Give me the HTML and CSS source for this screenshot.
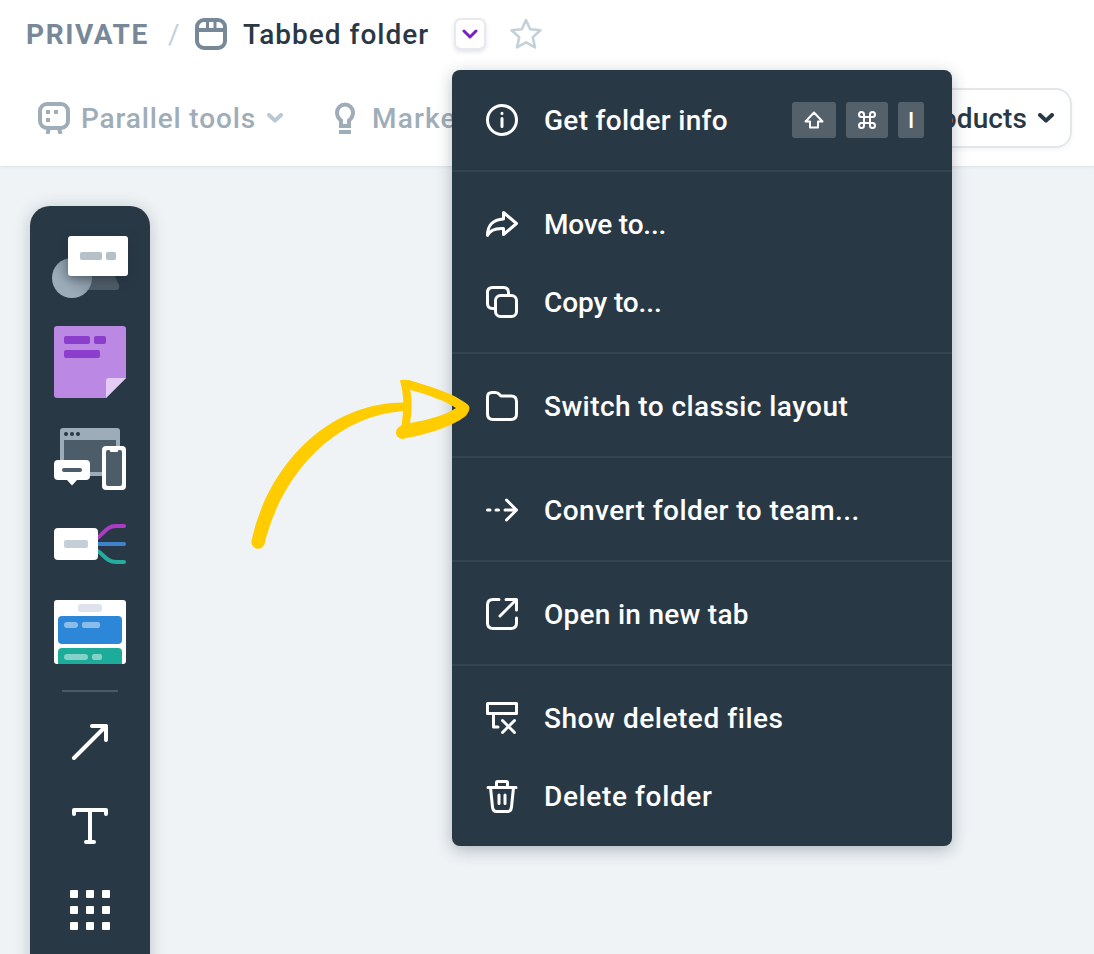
FILE: index.html
```html
<!DOCTYPE html>
<html lang="en">
<head>
	<meta charset="utf-8">
	<title>Tabbed folder</title>
	<link rel="stylesheet" href="styles.css">
</head>
<body>
	<header class="header">
		<div class="crumbs">
			<span class="space">PRIVATE</span>
			<span class="slash">/</span>
			<svg class="folder-icon" width="32" height="32" fill="none" stroke="#778998" stroke-width="4">
				<rect x="2" y="2" width="28" height="28" rx="7"/>
				<path d="M2 12H30"/>
				<path stroke-width="3" d="M12.500 2V12M20 2V12"/>
			</svg>
			<h1 class="title">Tabbed folder</h1>
			<button class="dropdown">
				<svg width="16" height="10" fill="none" stroke="#7a1fc0" stroke-width="3" stroke-linecap="round" stroke-linejoin="round"><path d="M2 2L8 8L14 2"/></svg>
			</button>
			<svg class="star" width="34" height="34" fill="none" stroke="#c4d0da" stroke-width="2.6" stroke-linejoin="round">
				<path d="M17 3L21.200 12.200L31.400 13.200L23.800 20.200L26 30.400L17 25.400L8 30.400L10.200 20.200L2.600 13.200L12.800 12.200Z"/>
			</svg>
		</div>
		<nav class="tabs">
			<a class="tab tab-tools">
				<svg width="32" height="32" fill="none" stroke="#9fadb9" stroke-width="4">
					<rect x="2" y="2" width="28" height="24" rx="7"/>
					<path d="M11 26L9.500 32M21 26L22.500 32"/>
					<path stroke="none" fill="#9fadb9" d="M8 8h4v4h-4zM16 8h4v4h-4zM8 16h4v4h-4z"/>
				</svg>
				<span>Parallel tools</span>
				<svg class="chevron" width="16" height="10" fill="none" stroke="#b9c8d3" stroke-width="4" stroke-linecap="round" stroke-linejoin="round"><path d="M2 2L8 7.600L14 2"/></svg>
			</a>
			<a class="tab tab-market">
				<svg width="20" height="32" fill="none" stroke="#9fadb9" stroke-width="4">
					<path d="M6 24V18.500C3.600 16.500 2 14 2 10.500A8 8 0 0 1 18 10.500C18 14 16.400 16.500 14 18.500V24ZM4 30H16"/>
				</svg>
				<span>Marketing</span>
			</a>
			<a class="tab tab-products">
				<span>Products</span>
				<svg class="chevron" width="16" height="10" fill="none" stroke="#2a3845" stroke-width="4" stroke-linecap="round" stroke-linejoin="round"><path d="M2 2L8 7.600L14 2"/></svg>
			</a>
		</nav>
	</header>

	<aside class="toolbar">
		<svg class="tool-shapes" width="80" height="64">
			<defs>
				<linearGradient id="circle" x1="0" y1="1" x2="1" y2="0">
					<stop offset="0.3" stop-color="#9cacb9"/>
					<stop offset="1" stop-color="#75838f"/>
				</linearGradient>
			</defs>
			<path fill="#4d5b67" d="M30 30H60L69 49Q70 54 66 54H24Z"/>
			<circle cx="22" cy="42" r="20" fill="url(#circle)"/>
			<rect class="card" x="18" width="60" height="40" rx="3" fill="#fff"/>
			<rect x="30" y="16" width="22" height="8" rx="2" fill="#b6c0c8"/>
			<rect x="56" y="16" width="10" height="8" rx="2" fill="#b6c0c8"/>
		</svg>
		<svg class="tool-note" width="72" height="72">
			<path fill="#bb88e3" d="M3 0H69Q72 0 72 3V52L52 72H3Q0 72 0 69V3Q0 0 3 0Z"/>
			<path fill="#e3cdf4" d="M72 52L52 72V55Q52 52 55 52Z"/>
			<g fill="#8b3dcb">
				<rect x="10" y="10" width="26" height="8" rx="2"/>
				<rect x="40" y="10" width="12" height="8" rx="2"/>
				<rect x="10" y="24" width="36" height="8" rx="2"/>
			</g>
		</svg>
		<svg class="tool-devices" width="72" height="64">
			<rect x="6" width="60" height="48" rx="3" fill="#9cacb9"/>
			<rect x="10" y="12" width="52" height="32" fill="#4c5c68"/>
			<g fill="#283744"><circle cx="12" cy="6" r="2"/><circle cx="18" cy="6" r="2"/><circle cx="24" cy="6" r="2"/></g>
			<path fill="#fff" d="M4 32H32Q36 32 36 36V48Q36 52 32 52H23L18 57.500L13 52H4Q0 52 0 48V36Q0 32 4 32Z"/>
			<rect x="8" y="40" width="20" height="4" rx="2" fill="#4c5c68"/>
			<rect x="48" y="18" width="24" height="44" rx="4" fill="#fff"/>
			<rect x="52" y="22" width="16" height="36" rx="2" fill="#4c5c68"/>
			<path fill="#fff" d="M55 21H65L63.500 24H56.500Z"/>
		</svg>
		<svg class="tool-mindmap" width="72" height="40" fill="none" stroke-width="4" stroke-linecap="round">
			<path stroke="#ad3bc6" d="M42 15C50 10 52 2 62 2H70"/>
			<path stroke="#3d82ca" d="M42 20H70"/>
			<path stroke="#24ad9c" d="M42 26C50 30 52 38 62 38H70"/>
			<rect y="4" width="44" height="32" rx="4" fill="#fff"/>
			<rect x="10" y="16" width="24" height="8" rx="2" fill="#c3ced8"/>
		</svg>
		<svg class="tool-kanban" width="72" height="64">
			<rect width="72" height="64" rx="3" fill="#fff"/>
			<rect x="24" y="4" width="24" height="8" rx="3" fill="#dee2ec"/>
			<rect x="4" y="16" width="64" height="28" rx="4" fill="#2d87d9"/>
			<path fill="#1eac9a" d="M4 64V52Q4 48 8 48H64Q68 48 68 52V64Z"/>
			<g fill="#fff" fill-opacity=".45">
				<rect x="10" y="22" width="14" height="6" rx="3"/>
				<rect x="28" y="22" width="18" height="6" rx="2"/>
				<rect x="10" y="54" width="24" height="6" rx="3"/>
				<rect x="38" y="54" width="10" height="6" rx="2"/>
			</g>
		</svg>
		<hr>
		<svg class="tool-arrow" width="40" height="40" fill="none" stroke="#fff" stroke-width="4" stroke-linecap="round" stroke-linejoin="round">
			<path d="M4 34L36 2M22 2H36V16"/>
		</svg>
		<svg class="tool-text" width="36" height="36" fill="none" stroke="#fff" stroke-width="4" stroke-linecap="round" stroke-linejoin="round">
			<path d="M2 6V2H34V6M18 2V34M14 34H22"/>
		</svg>
		<svg class="tool-grid" width="40" height="40" fill="#fff">
			<rect width="8" height="8" rx="1"/><rect x="16" width="8" height="8" rx="1"/><rect x="32" width="8" height="8" rx="1"/>
			<rect y="16" width="8" height="8" rx="1"/><rect x="16" y="16" width="8" height="8" rx="1"/><rect x="32" y="16" width="8" height="8" rx="1"/>
			<rect y="32" width="8" height="8" rx="1"/><rect x="16" y="32" width="8" height="8" rx="1"/><rect x="32" y="32" width="8" height="8" rx="1"/>
		</svg>
	</aside>

	<div class="menu">
		<ul>
			<li>
				<svg viewBox="0 0 36 36"><circle cx="18" cy="18" r="14.500"/><path d="M18 16.500V24.500M18 11.300V11.600"/></svg>
				<span class="t-info">Get folder info</span>
				<span class="keys">
					<kbd class="key-shift"><svg width="20" height="18"><path d="M10 1.500L18.500 10.500H14V16.500H6V10.500H1.500Z"/></svg></kbd>
					<kbd class="key-cmd"><svg width="18" height="18"><path d="M6 6H12V12H6ZM6 6V3.500A2.500 2.500 0 1 0 3.500 6ZM12 6H14.500A2.500 2.500 0 1 0 12 3.500ZM12 12V14.500A2.500 2.500 0 1 0 14.500 12ZM6 12H3.500A2.500 2.500 0 1 0 6 14.500Z"/></svg></kbd>
					<kbd class="key-i">I</kbd>
				</span>
			</li>
		</ul>
		<ul>
			<li>
				<svg viewBox="0 0 36 36"><path d="M19.500 6.500L32.500 17.500L19.500 28.500V22.500C11 22 6 24 3.500 29.500C3.500 20 8.500 13.500 19.500 13Z"/></svg>
				<span class="t-move">Move to...</span>
			</li>
			<li>
				<svg viewBox="0 0 36 36"><rect x="11.500" y="11.500" width="21" height="21" rx="5"/><path d="M11.500 24.500H8.500Q3.500 24.500 3.500 19.500V8.500Q3.500 3.500 8.500 3.500H19.500Q24.500 3.500 24.500 8.500V11.500"/></svg>
				<span class="t-copy">Copy to...</span>
			</li>
		</ul>
		<ul>
			<li>
				<svg viewBox="0 0 36 36"><path d="M3.500 9Q3.500 4.500 8 4.500H11Q14 4.500 15.500 6.500L17 8H27Q32.500 8 32.500 13.500V26Q32.500 31.500 27 31.500H9Q3.500 31.500 3.500 26Z"/></svg>
				<span class="t-switch">Switch to classic layout</span>
			</li>
		</ul>
		<ul>
			<li>
				<svg viewBox="0 0 36 36"><path d="M3.500 18H6M12 18H14.500M21 18H32M22.500 8L32.500 18L22.500 28"/></svg>
				<span class="t-convert">Convert folder to team...</span>
			</li>
		</ul>
		<ul>
			<li>
				<svg viewBox="0 0 36 36"><path d="M15 3.500H9Q3.500 3.500 3.500 9V27Q3.500 32.500 9 32.500H27Q32.500 32.500 32.500 27V22M22 3.500H32.500V14M32.500 3.500L16 20"/></svg>
				<span class="t-open">Open in new tab</span>
			</li>
		</ul>
		<ul>
			<li>
				<svg viewBox="0 0 36 36"><path d="M3.500 3.500H32.500V13.500H3.500ZM9.500 13.500V27H14M18.500 20.500L30.500 32.500M30.500 20.500L18.500 32.500"/></svg>
				<span class="t-show">Show deleted files</span>
			</li>
			<li>
				<svg viewBox="0 0 36 36"><path d="M4 9.500H32M12.500 9V4.500Q12.500 3.500 13.500 3.500H22.500Q23.500 3.500 23.500 4.500V9M6.500 9.500L8.500 29Q9 33.500 12.500 33.500H23.500Q27 33.500 27.500 29L29.500 9.500M15 17V25.500M21 17V25.500"/></svg>
				<span class="t-delete">Delete folder</span>
			</li>
		</ul>
	</div>

	<svg class="pointer" width="224" height="176" fill="#fc0">
		<path d="M1.700 161C18 86 79 22 156 23.500V32C85 35 31 96 14.500 165A6.500 6.500 0 0 1 1.700 161Z"/>
		<path fill-rule="evenodd" d="M150 2Q150 0 159 1C178 7 199 13 211 21Q220 26 219.500 29Q219 36 210 41C196 49 175 56 156 59A6.500 6.500 0 0 1 149 48Q152 47 152 43C154 28 154 15 150 2ZM160 10C162.500 20 162 34 160 44C178 41 196 36 206 29C196 22 178 16 164 12Q160 11 160 10Z"/>
	</svg>
</body>
</html>
```

FILE: styles.css
```css
* { box-sizing: border-box; }

body {
	margin: 0;
	height: 954px;
	overflow: hidden;
	position: relative;
	background: #eff3f6;
	color: #2a3845;
	font: 500 28px/36px Roboto, "Liberation Sans", sans-serif;
	white-space: nowrap;
}

/* header */
.header {
	height: 166px;
	background: #fff;
	box-shadow: 0 0 4px rgba(40, 55, 68, .16);
}
.crumbs {
	display: flex;
	align-items: center;
	height: 68px;
	padding-left: 26px;
}
.crumbs span, .title, .tab span, .menu li > span:not(.keys) { padding-top: 2px; }
.space {
	width: 142px;
	color: #778998;
	font-weight: 700;
	letter-spacing: 1.6px;
}
.slash {
	width: 27px;
	color: #c4d0da;
	font-weight: 400;
}
.title {
	width: 211px;
	margin: 0 0 0 16px;
	font-size: 28px;
	font-weight: 500;
	letter-spacing: 1px;
}
.dropdown {
	display: flex;
	align-items: center;
	justify-content: center;
	width: 32px;
	height: 32px;
	padding: 0;
	border: 2px solid #e8e8f2;
	border-radius: 7px;
	background: #fff;
	box-shadow: 0 2px 4px rgba(40, 55, 68, .14);
}
.star { margin-left: 23px; }

.tabs {
	display: flex;
	align-items: center;
	height: 60px;
	margin-top: 20px;
	padding: 0 22px 0 38px;
}
.tab {
	display: flex;
	align-items: center;
	color: #9fadb9;
}
.tab-tools span {
	width: 174px;
	margin-left: 11px;
	letter-spacing: .85px;
}
.tab-tools .chevron { margin-left: 12px; }
.tab-market { margin-left: 52px; }
.tab-market span {
	margin-left: 17px;
	letter-spacing: 1.2px;
}
.tab-products {
	height: 60px;
	margin-left: auto;
	padding: 0 16px 0 26px;
	border: 2px solid #e3e7ed;
	border-radius: 16px;
	color: #2a3845;
	box-shadow: 0 2px 4px rgba(40, 55, 68, .05);
}
.tab-products span { letter-spacing: .1px; }
.tab-products .chevron { margin-left: 11px; }

/* left toolbar */
.toolbar {
	display: flex;
	flex-direction: column;
	align-items: center;
	width: 120px;
	height: 780px;
	margin: 40px 0 0 30px;
	padding-top: 30px;
	border-radius: 20px;
	background: #293845;
	box-shadow: 0 2px 16px rgba(40, 55, 68, .25);
}
.toolbar svg { flex: none; }
.card { filter: drop-shadow(0 3px 5px rgba(30, 42, 52, .5)); }
.tool-shapes { overflow: visible; }
.tool-note { margin-top: 26px; }
.tool-devices { margin-top: 30px; }
.tool-mindmap { margin-top: 32px; }
.tool-kanban { margin-top: 36px; }
.toolbar hr {
	flex: none;
	width: 56px;
	height: 2px;
	margin: 26px 0 0;
	border: 0;
	background: #4c5b68;
}
.tool-arrow { margin-top: 32px; }
.tool-text { margin-top: 44px; }
.tool-grid { margin-top: 46px; }

/* folder menu */
.menu {
	position: absolute;
	left: 452px;
	top: 70px;
	width: 500px;
	border-radius: 8px;
	background: #293845;
	color: #fff;
	box-shadow: 0 4px 16px rgba(40, 55, 68, .32);
}
.menu ul {
	margin: 0;
	padding: 13px 28px 11px 32px;
	border-top: 2px solid #33434f;
	list-style: none;
}
.menu ul:first-child {
	padding-top: 11px;
	border-top: 0;
}
.menu li {
	display: flex;
	align-items: center;
	height: 78px;
}
.menu li > svg {
	width: 36px;
	height: 36px;
	margin-right: 24px;
}
.menu svg {
	fill: none;
	stroke: #fff;
	stroke-width: 3;
	stroke-linecap: round;
	stroke-linejoin: round;
}
.t-info { letter-spacing: .3px; }
.t-move { letter-spacing: -.2px; }
.t-copy { letter-spacing: -.1px; }
.t-switch, .t-convert { letter-spacing: .43px; }
.t-open { letter-spacing: .27px; }
.t-show { letter-spacing: .55px; }
.t-delete { letter-spacing: .63px; }
.keys {
	display: flex;
	gap: 10px;
	margin-left: auto;
}
kbd {
	display: flex;
	align-items: center;
	justify-content: center;
	width: 42px;
	height: 36px;
	border-radius: 3px;
	background: #54606a;
	font: 500 22px Roboto, sans-serif;
}
.menu kbd svg { stroke-width: 2; }
.key-shift { width: 44px; }
.key-i { width: 26px; }

/* hand drawn arrow over the menu edge */
.pointer {
	position: absolute;
	left: 250px;
	top: 379px;
	overflow: visible;
}
```
